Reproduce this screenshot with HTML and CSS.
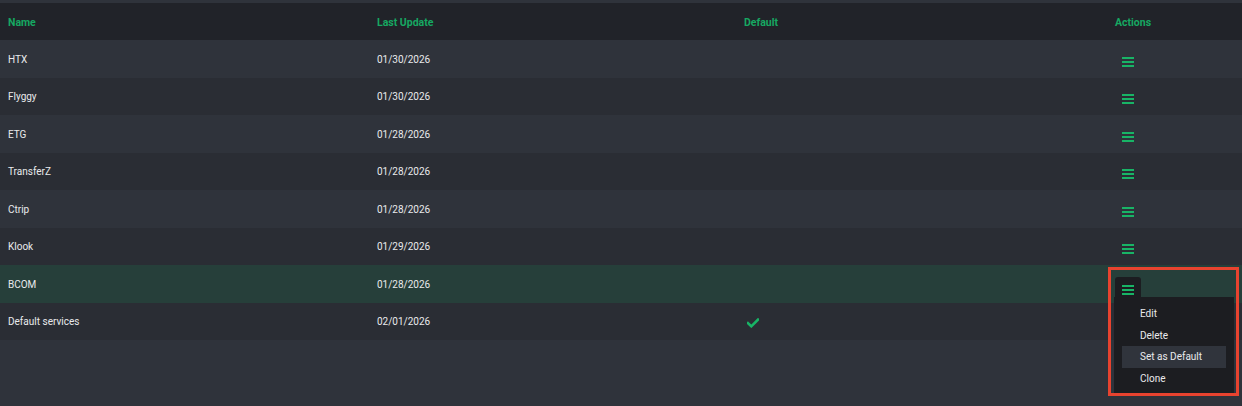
FILE: index.html
```html
<!DOCTYPE html>
<html>
<head>
<meta charset="utf-8">
<link rel="stylesheet" href="styles.css">
</head>
<body>
<div class="page">
  <div class="topstrip"></div>
  <div class="table">
    <div class="row head">
      <div class="cell">Name</div>
      <div class="cell">Last Update</div>
      <div class="cell">Default</div>
      <div class="cell">Actions</div>
    </div>
    <div class="row odd">
      <div class="cell">HTX</div><div class="cell">01/30/2026</div><div class="cell"></div>
      <div class="cell act"><span class="menu-btn"><svg class="burger" width="12" height="10" viewBox="0 0 12 10"><rect x="0" y="0" width="12" height="2"/><rect x="0" y="4" width="12" height="2"/><rect x="0" y="8" width="12" height="2"/></svg></span></div>
    </div>
    <div class="row even">
      <div class="cell">Flyggy</div><div class="cell">01/30/2026</div><div class="cell"></div>
      <div class="cell act"><span class="menu-btn"><svg class="burger" width="12" height="10" viewBox="0 0 12 10"><rect x="0" y="0" width="12" height="2"/><rect x="0" y="4" width="12" height="2"/><rect x="0" y="8" width="12" height="2"/></svg></span></div>
    </div>
    <div class="row odd">
      <div class="cell">ETG</div><div class="cell">01/28/2026</div><div class="cell"></div>
      <div class="cell act"><span class="menu-btn"><svg class="burger" width="12" height="10" viewBox="0 0 12 10"><rect x="0" y="0" width="12" height="2"/><rect x="0" y="4" width="12" height="2"/><rect x="0" y="8" width="12" height="2"/></svg></span></div>
    </div>
    <div class="row even">
      <div class="cell">TransferZ</div><div class="cell">01/28/2026</div><div class="cell"></div>
      <div class="cell act"><span class="menu-btn"><svg class="burger" width="12" height="10" viewBox="0 0 12 10"><rect x="0" y="0" width="12" height="2"/><rect x="0" y="4" width="12" height="2"/><rect x="0" y="8" width="12" height="2"/></svg></span></div>
    </div>
    <div class="row odd">
      <div class="cell">Ctrip</div><div class="cell">01/28/2026</div><div class="cell"></div>
      <div class="cell act"><span class="menu-btn"><svg class="burger" width="12" height="10" viewBox="0 0 12 10"><rect x="0" y="0" width="12" height="2"/><rect x="0" y="4" width="12" height="2"/><rect x="0" y="8" width="12" height="2"/></svg></span></div>
    </div>
    <div class="row even">
      <div class="cell">Klook</div><div class="cell">01/29/2026</div><div class="cell"></div>
      <div class="cell act"><span class="menu-btn"><svg class="burger" width="12" height="10" viewBox="0 0 12 10"><rect x="0" y="0" width="12" height="2"/><rect x="0" y="4" width="12" height="2"/><rect x="0" y="8" width="12" height="2"/></svg></span></div>
    </div>
    <div class="row hover">
      <div class="cell">BCOM</div><div class="cell">01/28/2026</div><div class="cell"></div>
      <div class="cell act">
        <span class="menu-btn open"><svg class="burger" width="12" height="10" viewBox="0 0 12 10"><rect x="0" y="0" width="12" height="2"/><rect x="0" y="4" width="12" height="2"/><rect x="0" y="8" width="12" height="2"/></svg></span>
        <div class="dropdown">
          <div class="item">Edit</div>
          <div class="item">Delete</div>
          <div class="item active">Set as Default</div>
          <div class="item">Clone</div>
        </div>
        <div class="annot"></div>
      </div>
    </div>
    <div class="row even">
      <div class="cell">Default services</div><div class="cell">02/01/2026</div>
      <div class="cell"><svg class="check" width="12" height="10" viewBox="0 0 12 10"><path d="M1 5.2 L4.3 8.3 L11 1.6" fill="none" stroke="#18b466" stroke-width="2.6" stroke-linecap="square"/></svg></div>
      <div class="cell act"></div>
    </div>
  </div>
</div>
</body>
</html>
```

FILE: styles.css
```css
html, body {
  margin: 0;
  padding: 0;
  background: #2f333b;
  font-family: Roboto, "Liberation Sans", sans-serif;
}
.page {
  width: 1242px;
  height: 406px;
  overflow: hidden;
  background: #2f333b;
}
.topstrip {
  height: 3px;
  background: #2f333b;
}
.table {
  display: flex;
  flex-direction: column;
}
.row {
  display: grid;
  grid-template-columns: 369px 367px 371px 135px;
  height: 37.5px;
  align-items: center;
  font-size: 10px;
  color: #e9eaec;
}
.row > .cell {
  padding-top: 1px;
}
.row.head {
  height: 37px;
  background: #212329;
  color: #16a862;
  font-weight: 700;
  font-size: 10.5px;
}
.row.odd { background: #2f333b; }
.row.even { background: #2a2d34; }
.row.hover { background: #263f3a; }
.cell {
  padding-left: 8px;
  white-space: nowrap;
}
.act {
  position: relative;
  height: 100%;
  display: flex;
  align-items: center;
  box-sizing: border-box;
}
.row > .cell.act {
  padding-top: 0;
}
.menu-btn {
  display: flex;
  align-items: center;
  justify-content: center;
  width: 26px;
  height: 26px;
  margin-top: 6px;
  border-radius: 3px 3px 0 0;
}
.menu-btn.open {
  background: #1c1d21;
  margin-top: 12px;
}
.burger rect { fill: #18b466; }
.check { margin-left: 3px; margin-top: 3px; display: block; }
.dropdown {
  position: absolute;
  left: 7px;
  top: 32px;
  width: 120px;
  padding: 6px 8px 4px 8px;
  box-sizing: border-box;
  background: #1c1d21;
  z-index: 2;
}
.dropdown .item {
  height: 21.5px;
  line-height: 22px;
  padding-left: 18px;
  font-size: 10px;
  color: #e9eaec;
}
.dropdown .item.active {
  background: #30343c;
}
.annot {
  position: absolute;
  left: 1px;
  top: 2px;
  width: 131px;
  height: 129px;
  box-sizing: border-box;
  border: 3px solid #e8432f;
  z-index: 3;
}
```
